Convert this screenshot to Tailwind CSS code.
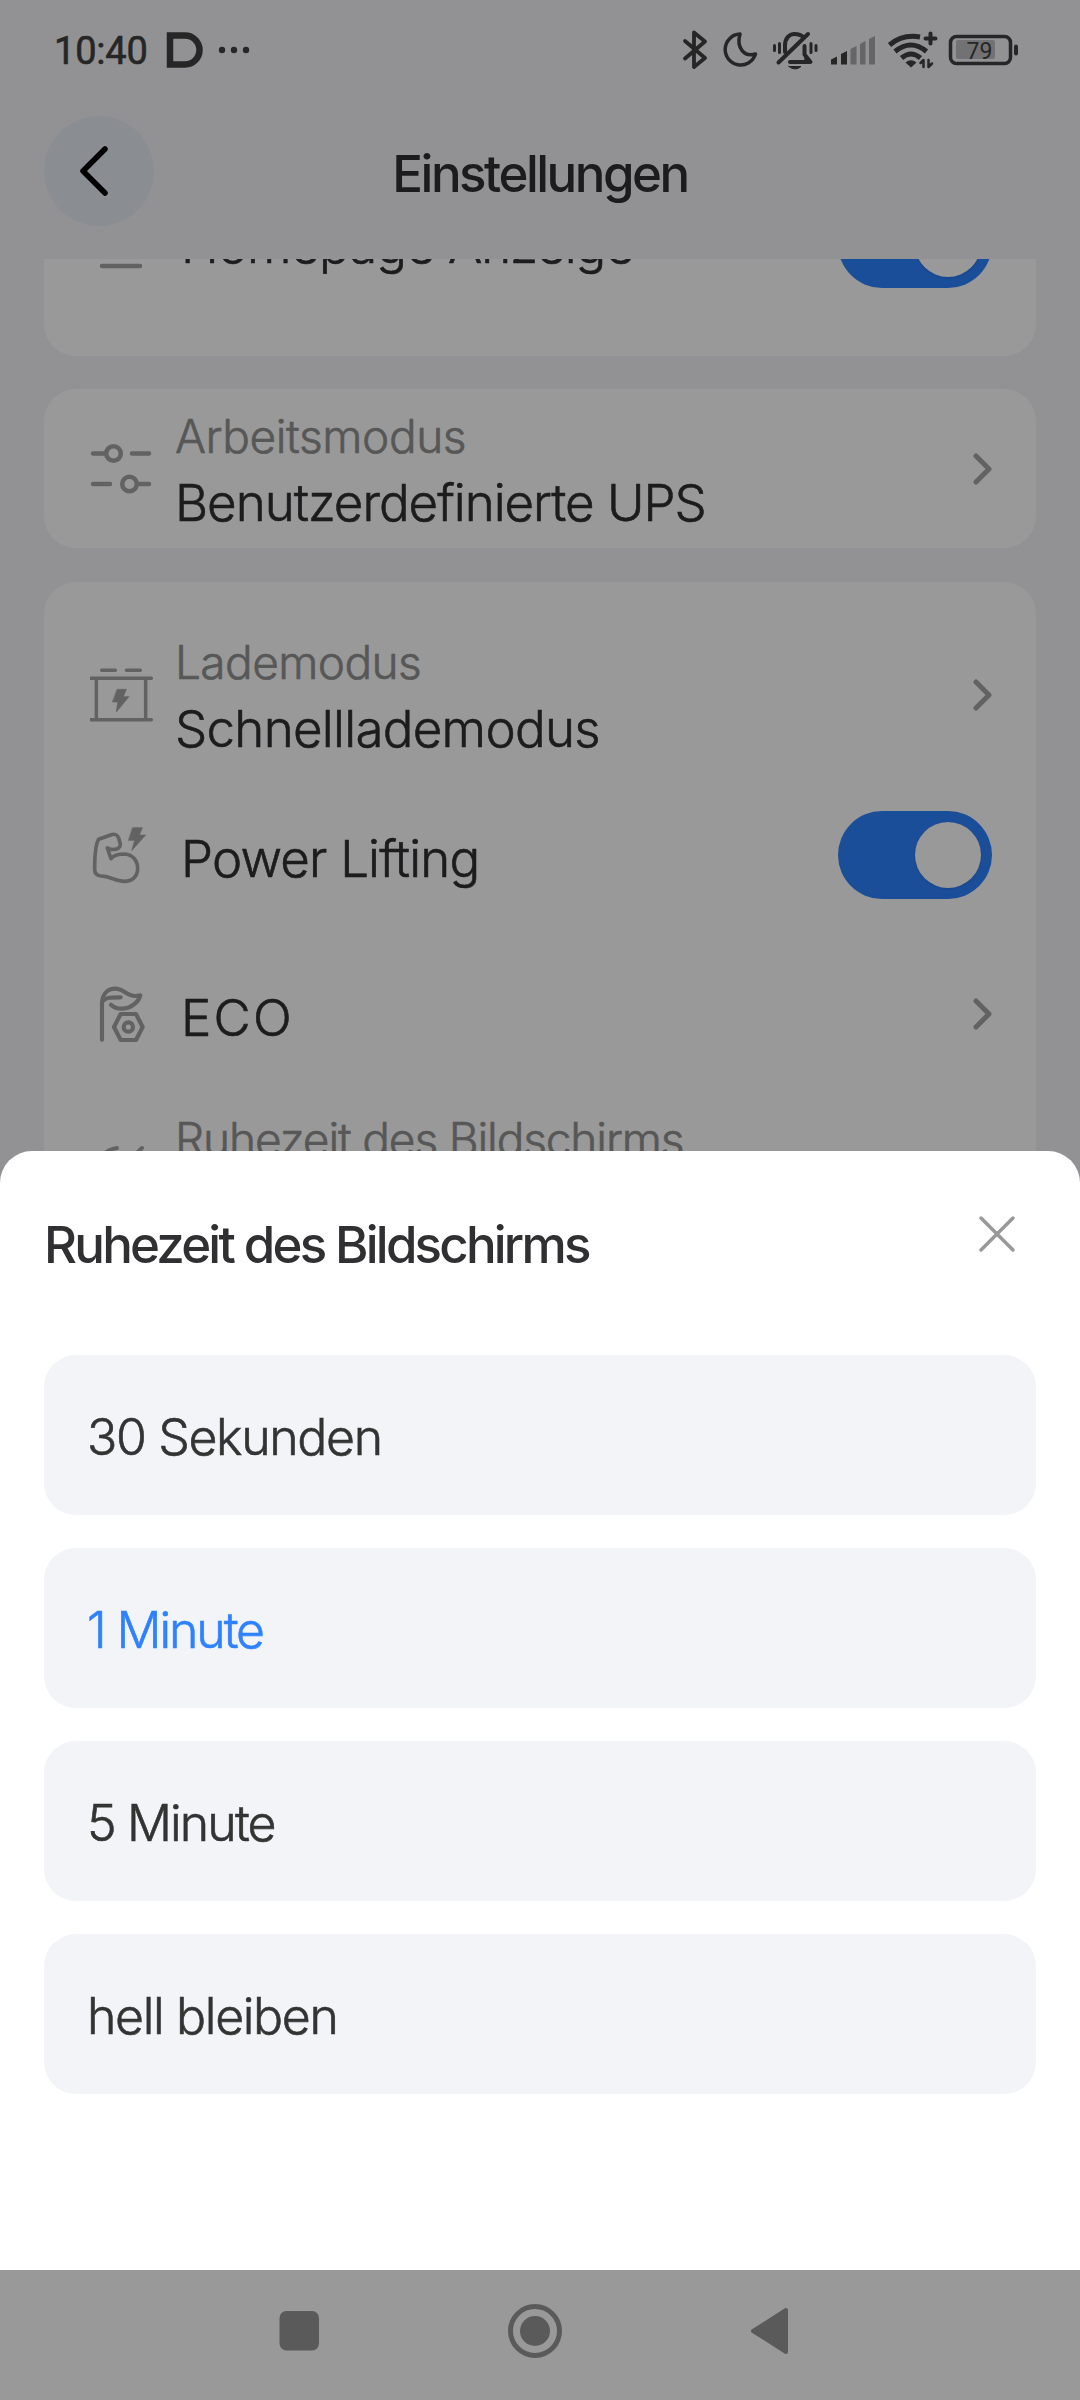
<!DOCTYPE html>
<html lang="de">
<head>
    <meta charset="UTF-8">
    <meta name="viewport" content="width=device-width, initial-scale=1.0">
    <title>Einstellungen</title>
    <script src="https://cdn.jsdelivr.net/npm/@tailwindcss/browser@4"></script>
</head>
<body class="bg-[#f3f3f7] font-['Inter',sans-serif] text-[#303032]">
<div class="relative w-[1080px] h-[2400px] overflow-hidden flex flex-col">

    <!-- Status bar -->
    <div class="h-[100px] shrink-0 flex items-center pl-[54px] pr-[60px] text-[#404040]">
        <span class="pt-[2px] font-['Roboto',sans-serif] [-webkit-text-stroke:0.6px] text-[38px] leading-none tracking-[-0.2px]">10:40</span>
        <svg class="ml-[18px] w-[38px] h-[38px]" viewBox="0 0 38 38" fill="none" stroke="currentColor" stroke-width="6.500"><path d="M4 4.500H19a14.500 14.500 0 0 1 0 29H4z"/></svg>
        <svg class="ml-[14px] w-[32px] h-[8px]" viewBox="0 0 32 8" fill="currentColor"><circle cx="4" cy="4" r="3.2"/><circle cx="16" cy="4" r="3.2"/><circle cx="28" cy="4" r="3.2"/></svg>
        <svg class="ml-auto w-[340px] h-[40px]" viewBox="680 30 340 40" fill="none" stroke="currentColor" stroke-width="4" stroke-linecap="round" stroke-linejoin="round">
            <path d="M685 41l20 17-11 9V32.500l11 9-20 17" stroke-width="3.800"/>
            <path d="M740 34a15.500 15.500 0 1 0 15.500 20c-11 3.500-19.500-6-15.500-20z" stroke-width="3.500"/>
            <path d="M785 52v-6.500C785 38.500 789 34 794.500 34q6 0 9 3.500M808 34l-29.500 28.500M804.500 46v8.500l6 7.500H790"/>
            <path d="M804.500 46v8.500l6 7.500h-5z" fill="currentColor" stroke-width="2"/>
            <path d="M789 66.500h12q-6 5-12 0z" fill="currentColor" stroke-width="1"/>
            <path d="M774.500 45.500v5M779.500 43.500v9M811 43.500v9M816 45.500v5" stroke-width="3"/>
            <g stroke="none" fill="currentColor">
                <path d="M831 64.500v-5l6-3v8zM841 64.500V54l6-3v13.500z"/>
                <path class="text-[#a8a8aa]" d="M850.500 64.500V49l6-3v18.500zM860 64.500V44l5.500-3v23.500zM869 64.500V39l6-3v28.500z"/>
            </g>
            <g stroke-width="5" stroke-linecap="butt">
                <path d="M889.500 45q13-11 30.500-8"/>
                <path d="M895 51.500q16-13 31.500 0"/>
                <path d="M901.500 58q9.500-8 19 0"/>
            </g>
            <path d="M905.500 62.500q5.500-4.500 11 0l-5.500 5z" fill="currentColor" stroke="none"/>
            <path d="M930.500 33.500v10M925.500 38.500h10" stroke-width="4"/>
            <path d="M923.500 67v-7l-3 3M928.500 60v7l3.500-3.500" stroke-width="2.500"/>
            <rect x="950.500" y="36.500" width="60" height="27" rx="6" stroke-width="3.500"/>
            <rect x="956" y="40" width="39" height="19" rx="2" fill="#808082" fill-opacity="0.45" stroke="none"/>
            <path d="M1016 46.500v7" stroke-width="4"/>
            <text x="966.500" y="58.500" fill="currentColor" stroke="none" font-family="Roboto" font-size="23" font-weight="400">79</text>
        </svg>
    </div>

    <!-- Header -->
    <header class="h-[159px] shrink-0 grid grid-cols-[110px_1fr_110px] items-start px-11 pt-4">
        <button class="w-[110px] h-[110px] rounded-full bg-[#e7ecf4] flex items-center justify-center">
            <svg class="mr-[2px] w-[40px] h-[56px]" viewBox="0 0 40 56" fill="none" stroke="#000" stroke-width="5.500" stroke-linecap="round" stroke-linejoin="round"><path d="M27 6L5 28l22 22"/></svg>
        </button>
        <h1 class="pt-[27px] text-center text-[51px] leading-[62px] font-medium tracking-[-2.5px]">Einstellungen</h1>
    </header>

    <!-- Settings list, scrolled so the first card is cut off -->
    <main class="flex-1 min-h-0 overflow-hidden px-11 flex flex-col gap-[33px] text-[51px] leading-[62px] font-light [-webkit-text-stroke:0.6px]">
        <section class="-mt-[94px] h-[191px] shrink-0 rounded-[32px] bg-white flex items-start pl-[46px] pr-11 pt-[35px]">
            <svg class="w-[64px] h-[88px] text-[#a4a4a4]" viewBox="0 0 64 88" fill="none" stroke="currentColor" stroke-width="4.500" stroke-linecap="round"><path d="M12 66h38M8 20h48v32H8z"/></svg>
            <span class="ml-[27px] pt-[14px] tracking-[-1px]">Homepage Anzeige</span>
            <div class="ml-auto w-[154px] h-[88px] rounded-full bg-[#2e82ff] flex items-center justify-end pr-[11px]"><div class="size-[66px] rounded-full bg-white shadow"></div></div>
        </section>

        <section class="h-[159px] shrink-0 rounded-[32px] bg-white flex items-center pl-[46px] pr-11">
            <svg class="w-[64px] h-[64px] text-[#a4a4a4]" viewBox="90 437 64 64" fill="none" stroke="currentColor" stroke-width="4.500" stroke-linecap="round"><path d="M93 453.500h11M132 453.500h17M93 484h17M139 484h10"/><circle cx="113.500" cy="453.500" r="7.300"/><circle cx="129.500" cy="484" r="7.300"/></svg>
            <div class="ml-[21px] pt-[2px] flex flex-col gap-[2px]">
                <span class="text-[46px] leading-[64px] text-[#919191] tracking-[-0.4px]">Arbeitsmodus</span>
                <span class="leading-[66px] tracking-[-1px]">Benutzerdefinierte UPS</span>
            </div>
            <svg class="ml-auto w-[20px] h-[34px] text-[#a4a4a4]" viewBox="0 0 20 34" fill="none" stroke="currentColor" stroke-width="5" stroke-linecap="round" stroke-linejoin="round"><path d="M4 4l13 13L4 30"/></svg>
        </section>

        <section class="mt-px h-[760px] shrink-0 rounded-[32px] bg-white pl-[46px] pr-11 pt-[33px]">
            <div class="h-[160px] flex items-center">
                <svg class="w-[64px] h-[64px] text-[#a4a4a4]" viewBox="30 9 192 192" fill="none" stroke="currentColor" stroke-width="10.500" stroke-linecap="round"><path d="M65 31h41M139 31h42M32 55h182M32 179h182M49 56v122M197 56v122"/><path d="M112 88h27l-9 22h17l-38 46 4-30H98z" fill="currentColor" stroke-width="2"/></svg>
                <div class="ml-[21px] pt-[1px] flex flex-col gap-[2px]">
                    <span class="text-[46px] leading-[64px] text-[#919191] tracking-[-0.6px]">Lademodus</span>
                    <span class="leading-[66px] tracking-[-0.7px]">Schnelllademodus</span>
                </div>
                <svg class="ml-auto w-[20px] h-[34px] text-[#a4a4a4]" viewBox="0 0 20 34" fill="none" stroke="currentColor" stroke-width="5" stroke-linecap="round" stroke-linejoin="round"><path d="M4 4l13 13L4 30"/></svg>
            </div>
            <div class="h-[160px] flex items-center">
                <svg class="w-[64px] h-[64px] text-[#a4a4a4]" viewBox="30 9 192 192" fill="none" stroke="currentColor" stroke-width="11" stroke-linecap="round" stroke-linejoin="round"><path d="M56 58l38-14c10-3 19 1 22 10l5 18c1 9-8 16-17 16-9 1-17 0-22-4l11 32c8-11 23-14 42-14 24 2 38 21 38 43 0 26-18 39-40 39-22-1-40-12-60-15l-10-1c-13-1-19-7-19-20 0-40 2-75 12-90z"/><path d="M158 23h29l-9 22h19l-42 47 9-31h-18z" fill="currentColor" stroke-width="2"/></svg>
                <span class="ml-[27px] pt-[7px] tracking-[-0.8px]">Power Lifting</span>
                <div class="ml-auto w-[154px] h-[88px] rounded-full bg-[#2e82ff] flex items-center justify-end pr-[11px]"><div class="size-[66px] rounded-full bg-white shadow"></div></div>
            </div>
            <div class="h-[157px] flex items-center">
                <svg class="w-[64px] h-[64px] text-[#a4a4a4]" viewBox="30 6 192 192" fill="none" stroke="currentColor" stroke-width="12.500" stroke-linecap="round" stroke-linejoin="round"><path d="M66 179V68c2-28 18-42 40-42 26 0 34 24 62 22l13-2c-6 22-30 40-56 40-14 0-25-5-32-12M68 64c10-13 28-12 54-12"/><path d="M122 102h46l20 39-20 39h-46l-20-39z"/><circle cx="145" cy="141" r="14"/></svg>
                <span class="ml-[27px] pt-[9px] tracking-[2.2px]">ECO</span>
                <svg class="ml-auto w-[20px] h-[34px] text-[#a4a4a4]" viewBox="0 0 20 34" fill="none" stroke="currentColor" stroke-width="5" stroke-linecap="round" stroke-linejoin="round"><path d="M4 4l13 13L4 30"/></svg>
            </div>
            <div class="h-[160px] flex items-center">
                <svg class="w-[64px] h-[64px] text-[#a4a4a4]" viewBox="90 1141 64 64" fill="none" stroke="currentColor" stroke-width="4" stroke-linecap="round"><path d="M117 1149q-9 1-15 8M142 1149l-8 8"/></svg>
                <div class="ml-[21px] pt-[2px] flex flex-col gap-[2px]">
                    <span class="text-[46px] leading-[64px] text-[#919191] tracking-[-1.15px]">Ruhezeit des Bildschirms</span>
                    <span class="leading-[66px] tracking-[-1.5px]">1 Minute</span>
                </div>
            </div>
        </section>
    </main>

    <!-- System navigation -->
    <nav class="h-[130px] shrink-0 bg-white text-[#969696]">
        <svg class="w-[1080px] h-[130px]" viewBox="0 2270 1080 130" fill="currentColor"><rect x="279.500" y="2311" width="39.500" height="39.500" rx="7"/><circle cx="535" cy="2331" r="24.500" fill="none" stroke="currentColor" stroke-width="5"/><circle cx="535" cy="2331" r="15"/><path d="M753 2331l33-21v42z" stroke="currentColor" stroke-width="4" stroke-linejoin="round"/></svg>
    </nav>

    <!-- Bottom sheet -->
    <div class="absolute inset-0 bg-black/40 flex flex-col justify-end pb-[130px]">
        <div class="h-[1119px] rounded-t-[32px] bg-white px-11 pt-[63px]">
            <div class="h-[141px] flex items-start">
                <h2 class="text-[51px] leading-[62px] font-medium tracking-[-2.8px]">Ruhezeit des Bildschirms</h2>
                <svg class="mt-px ml-auto mr-[20px] w-[38px] h-[38px] text-[#999]" viewBox="0 0 38 38" fill="none" stroke="currentColor" stroke-width="3.500" stroke-linecap="round"><path d="M3 3l32 32M35 3L3 35"/></svg>
            </div>
            <ul class="flex flex-col gap-[33px] text-[50px] font-light [-webkit-text-stroke:0.6px] text-[#333]">
                <li class="h-[160px] rounded-[32px] bg-[#f3f4f8] flex items-center pl-[43px] pt-[5px] tracking-[-1.35px]">30 Sekunden</li>
                <li class="h-[160px] rounded-[32px] bg-[#f3f4f8] flex items-center pl-[43px] pt-[5px] tracking-[-2.1px] text-[#2e82ff]">1 Minute</li>
                <li class="h-[160px] rounded-[32px] bg-[#f3f4f8] flex items-center pl-[43px] pt-[5px] tracking-[-1.9px]">5 Minute</li>
                <li class="h-[160px] rounded-[32px] bg-[#f3f4f8] flex items-center pl-[43px] pt-[5px] tracking-[-1.35px]">hell bleiben</li>
            </ul>
        </div>
    </div>
</div>
</body>
</html>
